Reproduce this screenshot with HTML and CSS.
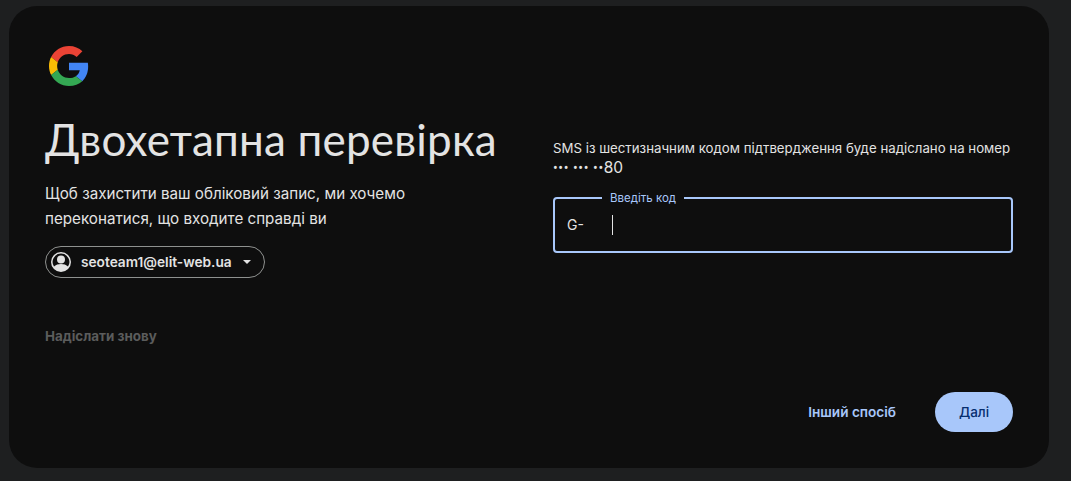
FILE: index.html
```html
<!DOCTYPE html>
<html lang="uk">
<head>
<meta charset="utf-8">
<title>Двохетапна перевірка</title>
<link rel="stylesheet" href="styles.css">
</head>
<body>
<main class="card">
  <div class="columns">
    <section class="left">
      <svg class="logo" viewBox="0 0 48 48" aria-hidden="true">
        <path fill="#EA4335" d="M24 9.5c3.54 0 6.71 1.22 9.21 3.6l6.85-6.85C35.9 2.38 30.47 0 24 0 14.62 0 6.51 5.38 2.56 13.22l7.98 6.19C12.43 13.72 17.74 9.5 24 9.5z"/>
        <path fill="#4285F4" d="M46.98 24.55c0-1.57-.15-3.09-.38-4.55H24v9.02h12.94c-.58 2.96-2.26 5.48-4.78 7.18l7.73 6c4.51-4.18 7.09-10.36 7.09-17.65z"/>
        <path fill="#FBBC05" d="M10.53 28.59c-.48-1.45-.76-2.99-.76-4.59s.27-3.14.76-4.59l-7.98-6.19C.92 16.46 0 20.12 0 24c0 3.88.92 7.54 2.56 10.78l7.97-6.19z"/>
        <path fill="#34A853" d="M24 48c6.48 0 11.93-2.13 15.89-5.81l-7.73-6c-2.15 1.45-4.92 2.3-8.16 2.3-6.26 0-11.57-4.22-13.47-9.91l-7.98 6.19C6.51 42.62 14.62 48 24 48z"/>
      </svg>
      <h1 class="title">Двохетапна перевірка</h1>
      <p class="lead">Щоб захистити ваш обліковий запис, ми хочемо переконатися, що входите справді ви</p>
      <div class="account">
        <svg class="avatar" viewBox="0 0 24 24" aria-hidden="true">
          <path fill="#e3e3e3" fill-rule="evenodd" d="M12 2a10 10 0 1 0 0 20 10 10 0 0 0 0-20zm0 1.6a8.4 8.4 0 0 1 7 13c-1.7-1.9-4.3-2.6-7-2.6s-5.3.7-7 2.6a8.4 8.4 0 0 1 7-13zm0 1.9a4 4 0 1 0 0 8 4 4 0 0 0 0-8z"/>
        </svg>
        <span class="email">seoteam1@elit-web.ua</span>
        <span class="caret"></span>
      </div>
      <div class="resend">Надіслати знову</div>
    </section>
    <section class="right">
      <p class="info">SMS із шестизначним кодом підтвердження буде надіслано на номер<br><span class="dots">••• ••• ••</span><span class="digits">80</span></p>
      <div class="field">
        <span class="field-label">Введіть код</span>
        <span class="prefix">G-</span>
        <span class="cursor"></span>
      </div>
    </section>
  </div>
  <footer class="actions">
    <span class="alt">Інший спосіб</span>
    <span class="next">Далі</span>
  </footer>
</main>
</body>
</html>
```
FILE: styles.css
```css
html, body { margin: 0; padding: 0; }
body {
  width: 1071px;
  height: 481px;
  overflow: hidden;
  background: #1e1f20;
  font-family: Inter, Roboto, sans-serif;
  color: #e3e3e3;
}
.card {
  box-sizing: border-box;
  width: 1040px;
  height: 462px;
  margin: 6px 0 0 9px;
  padding: 40px 36px 36px;
  background: #0e0e0e;
  border-radius: 28px;
  display: flex;
  flex-direction: column;
  justify-content: space-between;
}
.columns { display: flex; gap: 48px; }
.left, .right { width: 460px; }
.logo { display: block; width: 40px; height: 40px; margin-left: 4px; }
.title {
  margin: 23px 0 0;
  font-family: Lato, sans-serif;
  font-weight: 400;
  font-size: 44px;
  letter-spacing: 0.2px;
  line-height: 60px;
  color: #e3e3e3;
}
.lead {
  margin: 12px 0 0;
  width: 400px;
  font-size: 15.2px;
  line-height: 25px;
}
.account {
  box-sizing: border-box;
  display: inline-flex;
  align-items: center;
  width: 220px;
  height: 32px;
  margin-top: 15px;
  padding: 0 10px 0 3px;
  border: 1px solid #8e918f;
  border-radius: 16px;
}
.avatar { width: 24px; height: 24px; }
.email {
  margin-left: 8px;
  font-size: 13.7px;
  font-weight: 600;
}
.caret {
  margin-left: 11px;
  width: 0;
  height: 0;
  border-left: 4.5px solid transparent;
  border-right: 4.5px solid transparent;
  border-top: 4.5px solid #e3e3e3;
}
.resend {
  margin-top: 48px;
  font-size: 13.4px;
  line-height: 20px;
  font-weight: 700;
  color: #5b5c5c;
}
.right { padding-top: 92px; }
.info {
  margin: 0;
  font-size: 13.25px;
  line-height: 20px;
  white-space: nowrap;
}
.dots { font-family: Roboto, sans-serif; font-size: 14px; letter-spacing: 0.6px; }
.digits { font-size: 15.5px; }
.field {
  box-sizing: border-box;
  position: relative;
  display: flex;
  align-items: center;
  height: 56px;
  margin-top: 19px;
  padding: 0 0 1px 12px;
  border: 2px solid #a8c7fa;
  border-radius: 4px;
}
.field-label {
  position: absolute;
  top: -9px;
  left: 47px;
  padding: 0 8px;
  background: #0e0e0e;
  font-size: 11.5px;
  line-height: 16px;
  color: #a8c7fa;
}
.prefix { font-size: 14px; width: 45px; }
.cursor { width: 1px; height: 20px; background: #e3e3e3; }
.actions {
  display: flex;
  justify-content: flex-end;
  align-items: center;
  gap: 39px;
}
.alt { font-size: 13.6px; font-weight: 600; color: #a8c7fa; }
.next {
  width: 78px;
  height: 40px;
  border-radius: 20px;
  background: #a8c7fa;
  color: #062e6f;
  font-size: 13.5px;
  font-weight: 500;
  line-height: 40px;
  text-align: center;
}
```
